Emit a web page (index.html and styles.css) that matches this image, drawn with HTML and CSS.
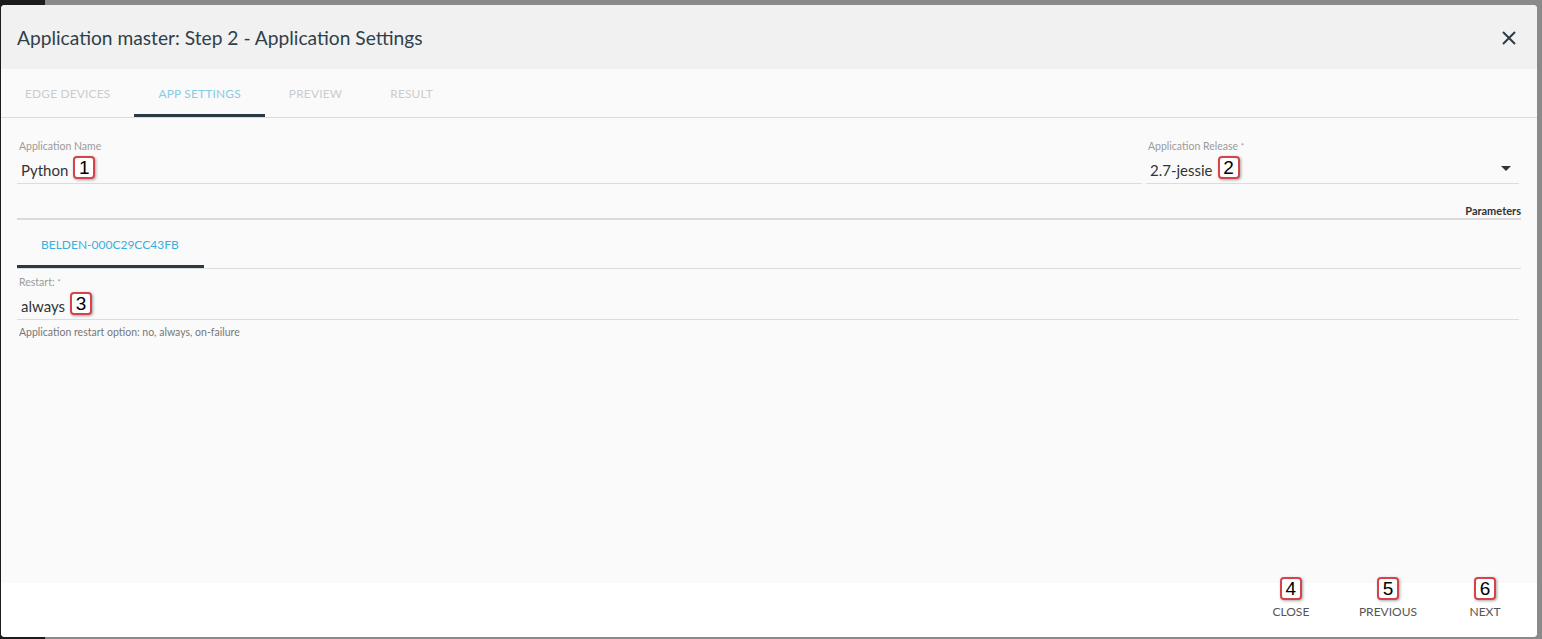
FILE: index.html
```html
<!DOCTYPE html>
<html>
<head>
<meta charset="utf-8">
<link rel="stylesheet" href="styles.css">
</head>
<body>
<div class="dialog">
  <div class="header">
    <h1 class="title">Application master: Step 2 - Application Settings</h1>
    <svg class="close-icon" width="16" height="16" viewBox="0 0 16 16"><path d="M2 2 L14 14 M14 2 L2 14" stroke="#2b3c48" stroke-width="2" fill="none"/></svg>
  </div>
  <div class="tabs">
    <div class="tab">Edge Devices</div>
    <div class="tab active">App Settings</div>
    <div class="tab">Preview</div>
    <div class="tab">Result</div>
  </div>
  <div class="body">
    <div class="row">
      <div class="field name-field">
        <div class="label">Application Name</div>
        <div class="value">Python <span class="badge">1</span></div>
      </div>
      <div class="field release-field">
        <div class="label">Application Release <span class="req">*</span></div>
        <div class="value select">2.7-jessie <span class="badge">2</span>
          <svg class="caret" width="10" height="5" viewBox="0 0 10 5"><path d="M0 0 L10 0 L5 5 Z" fill="#333"/></svg>
        </div>
      </div>
    </div>
    <div class="params">Parameters</div>
    <div class="device-tabs">
      <div class="device-tab">BELDEN-000C29CC43FB</div>
    </div>
    <div class="field restart-field">
      <div class="label">Restart: <span class="req">*</span></div>
      <div class="value">always <span class="badge">3</span></div>
    </div>
    <div class="helper">Application restart option: no, always, on-failure</div>
  </div>
  <div class="footer">
    <div class="btn"><span class="badge over">4</span>Close</div>
    <div class="btn"><span class="badge over">5</span>Previous</div>
    <div class="btn"><span class="badge over">6</span>Next</div>
  </div>
</div>
</body>
</html>
```

FILE: styles.css
```css
* { box-sizing: border-box; }
html, body { margin: 0; padding: 0; }
body {
  width: 1542px;
  height: 639px;
  overflow: hidden;
  background: linear-gradient(to right, #1c1c1c 45px, #8a8a8a 45px);
  font-family: "Lato", "Noto Sans", sans-serif;
  padding: 5px 5px 2px 1px;
}
.dialog {
  width: 1536px;
  height: 632px;
  border-radius: 4px;
  overflow: hidden;
  display: flex;
  flex-direction: column;
  background: #fafafa;
}
.header {
  height: 64px;
  flex: none;
  background: #f1f1f1;
  display: flex;
  align-items: center;
  justify-content: space-between;
  padding: 0 20px 0 16px;
}
.title {
  margin: 0;
  font-size: 19.2px;
  font-weight: 400;
  color: #2f3f4b;
}
.close-icon { margin-top: 2px; }
.tabs {
  height: 49px;
  flex: none;
  display: flex;
  background: #fafafa;
  border-bottom: 1px solid #dcdcdc;
}
.tab {
  padding: 0 24px;
  height: 48px;
  display: flex;
  align-items: center;
  font-size: 11.9px;
  letter-spacing: 0.2px;
  text-transform: uppercase;
  color: #c9cccf;
  border-bottom: 3px solid transparent;
  padding-top: 3px;
}
.tab.active {
  color: #86cbe4;
  border-bottom-color: #2b3942;
}
.body {
  flex: 1;
  background: #fafafa;
  padding: 0 16px 0 16px;
}
.row {
  display: flex;
  gap: 4px;
  padding-right: 2px;
}
.field { display: flex; flex-direction: column; }
.name-field { flex: 1; }
.release-field { width: 373px; flex: none; }
.label {
  margin-top: 21px;
  height: 14px;
  line-height: 14px;
  font-size: 10.5px;
  color: #9a9a9a;
  padding-left: 2px;
}
.req { font-size: 8px; vertical-align: top; }
.value {
  height: 31px;
  display: flex;
  align-items: center;
  padding-left: 4px;
  padding-top: 3px;
  font-size: 15px;
  color: #333;
  border-bottom: 1px solid #dcdcdc;
}
.select { position: relative; }
.caret { margin-left: auto; margin-right: 8px; margin-top: -3px; }
.badge {
  display: inline-flex;
  align-items: center;
  justify-content: center;
  width: 22px;
  height: 23px;
  margin-left: 5px;
  border: 2px solid #d6434a;
  border-radius: 4px;
  background: #fff;
  box-shadow: 1px 1px 3px rgba(0,0,0,0.35);
  font-family: "Liberation Sans", Arial, sans-serif;
  font-size: 19px;
  color: #000;
  line-height: 1;
}
.value .badge { margin-top: -4px; }
.params {
  margin-top: 20px;
  height: 16px;
  line-height: 14px;
  text-align: right;
  font-size: 11px;
  font-weight: 700;
  color: #333;
  border-bottom: 2px solid #dadada;
}
.device-tabs {
  height: 49px;
  display: flex;
  border-bottom: 1px solid #dcdcdc;
}
.device-tab {
  padding: 0 24px 0 24px;
  width: 187px;
  height: 48px;
  display: flex;
  align-items: center;
  padding-top: 3px;
  font-size: 12px;
  color: #3aaedc;
  border-bottom: 3px solid #2b3942;
}
.restart-field { margin-right: 2px; }
.restart-field .label { margin-top: 6px; }
.helper {
  margin-top: 6px;
  padding-left: 2px;
  font-size: 10.5px;
  color: #777;
}
.footer {
  height: 54px;
  flex: none;
  background: #fff;
  display: flex;
  align-items: center;
  justify-content: flex-end;
  gap: 8px;
  padding-right: 8px;
}
.btn {
  position: relative;
  min-width: 88px;
  height: 36px;
  display: flex;
  align-items: center;
  justify-content: center;
  padding: 0 16px;
  padding-top: 2px;
  font-size: 12px;
  text-transform: uppercase;
  color: #555;
}
.badge.over {
  position: absolute;
  top: -15px;
  left: 50%;
  margin-left: -11px;
}
```
